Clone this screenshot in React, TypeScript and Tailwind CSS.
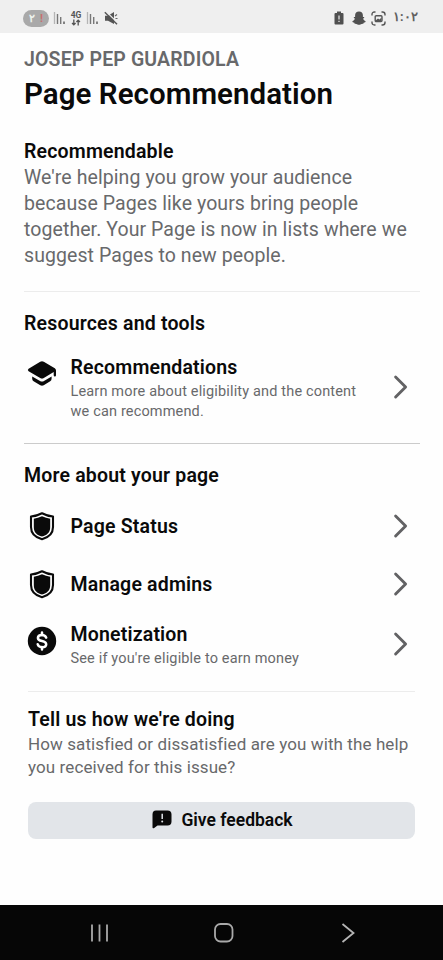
import React from 'react';

const Chevron = () => (
  <svg width="16" height="26" viewBox="0 0 16 26" fill="none" stroke="#626264" strokeWidth="2.9" strokeLinecap="round" strokeLinejoin="round" className="shrink-0">
    <path d="M3.6 3 L13.6 13 L3.6 23" />
  </svg>
);

const GraduationIcon = () => (
  <svg width="30" height="28" viewBox="0 0 30 28" className="block">
    <path d="M13.2 1.7 Q15 .7 16.8 1.7 L27.8 8.2 Q29 9 29 10.4 V15.2 Q29 16.6 27.9 16.6 Q26.7 16.6 26.7 15.2 V11.9 L16.8 18 Q15 19 13.2 18 L1.6 11.2 Q0 10 1.6 8.7 Z" fill="#0a0a0a" />
    <path d="M5.2 16.4 L13 21 Q15 22 17 21 L24.6 16.5 V18.8 Q24.6 20.4 23.2 21.2 L16.7 25.2 Q15 26.1 13.3 25.2 L6.6 21.2 Q5.2 20.4 5.2 18.8 Z" fill="#0a0a0a" />
  </svg>
);

const ShieldIcon = () => (
  <svg width="30" height="30" viewBox="0 0 30 30" className="block">
    <path d="M15 2.2 Q20.3 5 26 5.5 V16 C26 23 21.5 26.5 15 28.2 C8.5 26.5 4 23 4 16 V5.5 Q9.700 5 15 2.2 Z" fill="#fff" stroke="#0a0a0a" strokeWidth="2.1" strokeLinejoin="round" />
    <path d="M15 5.3 Q19 7.300 23.200 7.700 V16 C23.200 21.600 20 24.2 15 25.6 C10 24.2 6.800 21.600 6.800 16 V7.700 Q11 7.300 15 5.3 Z" fill="#0a0a0a" />
  </svg>
);

const DollarIcon = () => (
  <svg width="30" height="30" viewBox="0 0 30 30" fill="none" className="block">
    <circle cx="15" cy="15" r="14.2" fill="#0a0a0a" />
    <path d="M19.2 11.6 C18.6 9.8 17.2 8.9 15 8.9 C12.6 8.9 10.9 10 10.9 11.9 C10.9 13.9 12.6 14.5 15 15 C17.4 15.5 19.2 16.2 19.2 18.2 C19.2 20.1 17.5 21.2 15 21.2 C12.7 21.2 11.2 20.2 10.7 18.3" stroke="#fff" strokeWidth="2.5" strokeLinecap="round" />
    <path d="M15 6.5 V9 M15 21 V23.6" stroke="#fff" strokeWidth="2.5" strokeLinecap="round" />
  </svg>
);

const FeedbackIcon = () => (
  <svg width="20" height="19" viewBox="0 0 20 19" className="block">
    <path d="M4 .5 H15.5 Q19.5 .5 19.5 4.5 V11.5 Q19.5 15.5 15.5 15.5 H5.5 L2.2 18 Q.5 19 .5 17.3 V4.5 Q.5 .5 4 .5 Z" fill="#0a0a0a" />
    <path d="M10.2 3.8 V9" stroke="#e2e5e9" strokeWidth="1.5" />
    <circle cx="10.2" cy="11.5" r="1" fill="#e2e5e9" />
  </svg>
);

const SignalIcon = () => (
  <svg width="13" height="14" viewBox="0 0 13 14" fill="none" className="block">
    <path d="M1.5 1 V13" stroke="#b5b5b5" strokeWidth="1.3" />
    <path d="M4.5 3 V13 M7.7 6 V13" stroke="#777" strokeWidth="1.4" />
    <path d="M11 10.5 V13" stroke="#666" strokeWidth="1.6" />
  </svg>
);

const StatusBar = () => (
  <div className="h-[33px] bg-[#efefef] flex items-center justify-between pl-[23px] pr-[28px] pt-[3px] shrink-0">
    <div className="flex items-center">
      <div className="w-[26px] h-[17px] rounded-full bg-[#a9a9a9] flex items-center justify-center gap-[5px] text-[11px] leading-none font-bold">
        <span className="text-[#eef3ee]">٢</span>
        <span className="text-[#c86f6f]">!</span>
      </div>
      <div className="ml-[4px]"><SignalIcon /></div>
      <div className="ml-[4px] w-[12px] flex flex-col items-center text-[#555]">
        <span className="text-[8.5px] leading-[8px] font-bold">4G</span>
        <svg width="10" height="7" viewBox="0 0 10 8" fill="none" stroke="#555" strokeWidth="1.5">
          <path d="M2.5 .5 V6.5 M.5 4.5 L2.5 6.7 L4.5 4.5 M7.5 7.5 V1.5 M5.5 3.5 L7.5 1.3 L9.5 3.5" />
        </svg>
      </div>
      <div className="ml-[4px]"><SignalIcon /></div>
      <svg width="14" height="14" viewBox="0 0 14 14" className="ml-[5px]">
        <path d="M1 4.8 H4 L10 1 V13 L4 9.7 H1 Z" fill="#555" />
        <path d="M2 .5 L14 12.2" stroke="#efefef" strokeWidth="1.2" />
        <path d="M.8 1.3 L13 13.2" stroke="#555" strokeWidth="1.4" />
        <path d="M11 5 L13 3.5 M11.5 7.5 H13.5" stroke="#666" strokeWidth="1.1" />
      </svg>
    </div>
    <div className="flex items-center">
      <svg width="10" height="14" viewBox="0 0 10 14">
        <path d="M3 .5 H7 V2 H8.5 Q9.5 2 9.5 3 V12.5 Q9.5 13.5 8.5 13.5 H1.5 Q.5 13.5 .5 12.5 V3 Q.5 2 1.5 2 H3 Z" fill="#505050" />
        <path d="M5 4.5 V8.5 M5 9.7 V11" stroke="#eee" strokeWidth="1.2" />
      </svg>
      <svg width="14" height="14" viewBox="0 0 14 14" className="ml-[8px]">
        <path d="M7 .5 C9.5 .5 10.9 2.2 10.9 4.2 V6 L12.2 6 Q12.5 7 11.1 7.5 C11.5 9 12.4 9.8 13.7 10.2 Q13.7 11.5 11.7 11.7 L11.3 12.7 C9.5 12.4 8.7 13.7 7 13.7 C5.3 13.7 4.5 12.4 2.7 12.7 L2.3 11.7 Q.3 11.5 .3 10.2 C1.6 9.8 2.5 9 2.9 7.5 Q1.5 7 1.8 6 L3.1 6 V4.2 C3.1 2.2 4.5 .5 7 .5 Z" fill="#505050" />
      </svg>
      <svg width="15" height="15" viewBox="0 0 15 15" fill="none" stroke="#555" strokeWidth="1.4" className="ml-[5px]">
        <path d="M1 4.5 V3.5 Q1 1 3.5 1 H4.5 M10.5 1 H11.5 Q14 1 14 3.5 V4.5 M14 10.5 V11.5 Q14 14 11.5 14 H10.5 M4.5 14 H3.5 Q1 14 1 11.5 V10.5" />
        <rect x="4.2" y="4.7" width="6.8" height="5.8" rx="1" />
        <path d="M4.5 9.5 L7 7.5 L8.5 8.5 L10.5 6.5 V10 H4.5 Z" fill="#555" stroke="none" />
      </svg>
      <span className="ml-[7px] mt-[-2px] w-[22px] text-[12.5px] leading-[14px] font-bold text-[#606060] whitespace-nowrap">١:٠٢</span>
    </div>
  </div>
);

const SectionTitle = ({ children }: { children: React.ReactNode }) => (
  <h2 className="text-[19.5px] leading-[26px] tracking-[0.18px] font-semibold whitespace-nowrap">{children}</h2>
);

type RowProps = { icon: React.ReactNode; title: string; className: string; children?: React.ReactNode };

const Row = ({ icon, title, className, children }: RowProps) => (
  <div className={`flex ${className}`}>
    <div className="w-[30px] shrink-0">{icon}</div>
    <div className="ml-[13.5px] flex-1">
      <SectionTitle>{title}</SectionTitle>
      {children && (
        <p className="pt-px text-[14.5px] leading-[19.5px] tracking-[0.16px] text-[#68696b] whitespace-nowrap">{children}</p>
      )}
    </div>
    <div className="self-center mr-[12px] pb-[3px]"><Chevron /></div>
  </div>
);

const App = () => {
  return (
    <div className="w-[443px] h-[960px] bg-[#fefefe] flex flex-col overflow-hidden text-[#0a0a0a] font-[Roboto,sans-serif]">
      <StatusBar />

      <main className="flex-1 pl-[24px] pr-[23px]">
        <p className="mt-[14px] text-[19.5px] leading-[26px] tracking-[0.15px] font-semibold text-[#68696b] whitespace-nowrap">JOSEP PEP GUARDIOLA</p>
        <h1 className="mt-[2px] text-[29.5px] leading-[38px] tracking-[0.05px] font-semibold whitespace-nowrap">Page Recommendation</h1>

        <div className="mt-[26px]">
          <SectionTitle>Recommendable</SectionTitle>
          <p className="text-[19.5px] leading-[26px] tracking-[0.08px] text-[#68696b] whitespace-nowrap">
            We're helping you grow your audience<br />
            because Pages like yours bring people<br />
            together. Your Page is now in lists where we<br />
            suggest Pages to new people.
          </p>
        </div>
        <div className="mt-[22px] h-px bg-[#ececec]" />

        <div className="mt-[19px]">
          <SectionTitle>Resources and tools</SectionTitle>
          <Row icon={<div className="pt-[5px]"><GraduationIcon /></div>} title="Recommendations" className="mt-[18px] pl-[3px]">
            Learn more about eligibility and the content<br />we can recommend.
          </Row>
        </div>
        <div className="mt-[22px] h-px bg-[#cbcbcb]" />

        <div className="mt-[19px]">
          <SectionTitle>More about your page</SectionTitle>
          <Row icon={<div className="pb-[2px]"><ShieldIcon /></div>} title="Page Status" className="mt-[23px] pl-[3px] h-[30px] items-center" />
          <Row icon={<div className="pb-[3px]"><ShieldIcon /></div>} title="Manage admins" className="mt-[28px] pl-[3px] h-[30px] items-center" />
          <Row icon={<div className="pt-[4px]"><DollarIcon /></div>} title="Monetization" className="mt-[22px] pl-[3px]">
            See if you're eligible to earn money
          </Row>
        </div>

        <div className="pl-[4px] pr-[5px]">
          <div className="mt-[22.5px] h-px bg-[#ececec]" />
          <div className="mt-[15px]">
            <SectionTitle>Tell us how we're doing</SectionTitle>
            <p className="text-[17px] leading-[23px] tracking-[0.1px] text-[#68696b] whitespace-nowrap">
              How satisfied or dissatisfied are you with the help<br />
              you received for this issue?
            </p>
          </div>
          <button className="mt-[22.5px] w-full h-[37px] rounded-[8px] bg-[#e2e5e9] flex items-center justify-center gap-[9px] pl-[2px] pb-px">
            <FeedbackIcon />
            <span className="text-[17.5px] leading-[24px] font-semibold">Give feedback</span>
          </button>
        </div>
      </main>

      <nav className="h-[55px] bg-[#060606] flex items-center shrink-0 pl-[90px]">
        <svg width="20" height="20" viewBox="0 0 20 20" stroke="#a9a9a9" strokeWidth="1.8">
          <path d="M2 1.5 V18.5 M9.5 1.5 V18.5 M17 1.5 V18.5" />
        </svg>
        <svg width="20" height="20" viewBox="0 0 20 20" fill="none" stroke="#a9a9a9" strokeWidth="1.8" className="ml-[104px]">
          <rect x="1" y="1" width="17.5" height="17.5" rx="5.5" />
        </svg>
        <svg width="14" height="20" viewBox="0 0 14 20" fill="none" stroke="#b5b5b5" strokeWidth="1.8" className="ml-[107px]">
          <path d="M1.5 1 L12.5 10 L1.5 19" />
        </svg>
      </nav>
    </div>
  );
};

export default App;
